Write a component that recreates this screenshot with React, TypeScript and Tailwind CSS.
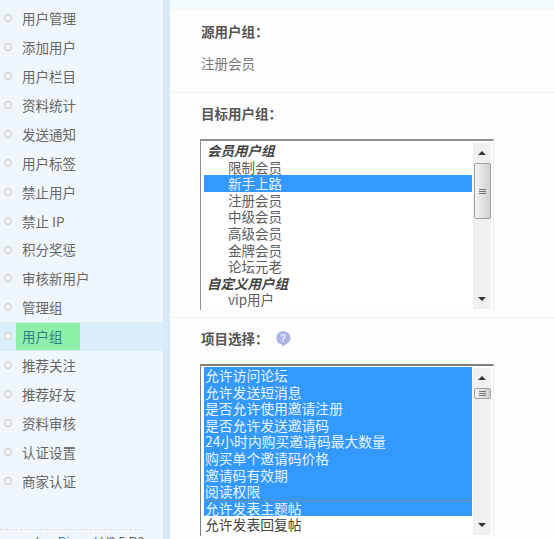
const font = { fontFamily: '"Noto Sans CJK SC", "Liberation Sans", sans-serif' };
const nav = ["用户管理","添加用户","用户栏目","资料统计","发送通知","用户标签","禁止用户","禁止 IP","积分奖惩","审核新用户","管理组","用户组","推荐关注","推荐好友","资料审核","认证设置","商家认证"];
const target: [string, number, boolean?, boolean?][] = [
  ["会员用户组",0,true],["限制会员",1],["新手上路",1,false,true],["注册会员",1],["中级会员",1],["高级会员",1],["金牌会员",1],["论坛元老",1],["自定义用户组",0,true],["vip用户",1],
];
const items = ["允许访问论坛","允许发送短消息","是否允许使用邀请注册","是否允许发送邀请码","24小时内购买邀请码最大数量","购买单个邀请码价格","邀请码有效期","阅读权限","允许发表主题帖","允许发表回复帖"];

function Scrollbar({ thumb }: { thumb: string }) {
  return (
    <div className="w-[18px] shrink-0 flex flex-col items-center bg-[#f0f0f0] my-px mr-[2px]">
      <div className="h-[20px] w-full flex items-center justify-center">
        <div className="w-0 h-0 border-l-[4px] border-r-[4px] border-b-[4px] border-l-transparent border-r-transparent border-b-[#333]" />
      </div>
      <div className={`w-[17px] ${thumb} shrink-0 rounded-[2px] border border-[#a0a0a0] bg-gradient-to-r from-[#f4f4f4] to-[#cfcfcf] flex flex-col items-center justify-center gap-px`}>
        <div className="w-[7px] h-px bg-[#777]" /><div className="w-[7px] h-px bg-[#777]" /><div className="w-[7px] h-px bg-[#777]" />
      </div>
      <div className="flex-1" />
      <div className="h-[20px] w-full flex items-center justify-center">
        <div className="w-0 h-0 border-l-[4px] border-r-[4px] border-t-[4px] border-l-transparent border-r-transparent border-t-[#333]" />
      </div>
    </div>
  );
}

export default function App() {
  return (
    <div style={font} className="w-[554px] h-[539px] overflow-hidden flex bg-[#fdfdfd] text-[#5c5c5c]">
      <aside className="w-[163px] shrink-0 bg-[#f0f7fc] pt-[4px] relative overflow-hidden">
        {nav.map((n, i) => (
          <div key={n} className={`h-[28.9px] flex items-center pl-[4px] gap-[10px] text-[13.5px] ${i === 11 ? "bg-[#d9edfb]" : ""}`}>
            <span className="w-[8px] h-[8px] shrink-0 rounded-full border border-[#c8c8c8] bg-[#f4f4f4]" />
            <span className={i === 11 ? "bg-[#8df0a8] -ml-[6px] pl-[6px] pr-[10px] w-[64px] h-[27px] flex items-center text-[#2f7f8a] whitespace-nowrap" : "text-[#666] whitespace-nowrap"}>{n}</span>
          </div>
        ))}
        <div className="mt-[34px] w-[142px] border-t border-dashed border-[#dcdcdc] pt-[5px] text-[12px] leading-[14px] text-[#666] pl-[36px] whitespace-nowrap [font-family:'Liberation_Sans',sans-serif]">
          by <span className="text-[#4a7ab5] ml-[6px]">Discuz!</span> V2.5 R2
        </div>
      </aside>
      <div className="w-[7px] shrink-0 bg-[#d9e9f6]" />
      <main className="flex-1 min-w-0">
        <div className="h-[10px] bg-[#f3fafc]" />
        <div className="pl-[31px] border-b border-[#f2f2f2] h-[83px]">
          <h3 className="text-[13.5px] font-bold text-[#555] pt-[11px] leading-[20px]">源用户组：</h3>
          <p className="text-[13.5px] text-[#777] mt-[12px] leading-[20px]">注册会员</p>
        </div>
        <div className="pl-[30px] h-[225px] border-b border-[#f2f2f2]">
          <h3 className="text-[13.5px] font-bold text-[#555] pt-[10px] pl-px leading-[20px]">目标用户组：</h3>
          <div className="mt-[16px] w-[294px] h-[171px] border-t-2 border-l border-[#909090] border-r border-r-[#eee] flex bg-white overflow-hidden pl-[3px] pt-px">
            <div className="flex-1 min-w-0 mr-px text-[13.5px] leading-[16.6px]">
              {target.map(([t, ind, bold, sel]) => (
                <div key={t} className={`h-[16.6px] whitespace-nowrap ${bold ? "font-bold italic text-[#444] pl-[3px]" : ""} ${ind ? "pl-[24px]" : ""} ${sel ? "bg-[#3399ff] text-[#e6f2ff]" : ""}`}>{t}</div>
              ))}
            </div>
            <Scrollbar thumb="h-[56px]" />
          </div>
        </div>
        <div className="pl-[30px]">
          <div className="flex items-center gap-[6px] pt-[10px] pl-px h-[31px]">
            <h3 className="text-[13.5px] font-bold text-[#555]">项目选择：</h3>
            <svg width="16" height="17" viewBox="0 0 16 17"><path d="M8 1a7.5 7 0 0 1 2.5 13.6L8 16.5 6.5 14.6A7.5 7 0 0 1 8 1z" fill="#a9b4e4"/><text x="8" y="12" textAnchor="middle" fontSize="10" fontWeight="700" fill="#eef" fontFamily="Liberation Sans">?</text></svg>
          </div>
          <div className="mt-[15px] w-[294px] h-[172px] border-t-2 border-l border-[#808080] border-r border-r-[#eee] flex bg-white overflow-hidden pl-[3px] pt-px">
            <div className="flex-1 min-w-0 mr-px text-[13.8px] leading-[16.6px]">
              {items.map((t, i) => (
                <div key={t} className={`h-[16.6px] whitespace-nowrap pl-[1px] ${i < 9 ? "bg-[#3399ff] text-[#e8f3ff]" : "text-[#444]"} ${i === 8 ? "border-t border-[#6d8fb5] leading-[15px]" : ""}`}>{t}</div>
              ))}
            </div>
            <Scrollbar thumb="h-[11px]" />
          </div>
        </div>
      </main>
    </div>
  );
}
